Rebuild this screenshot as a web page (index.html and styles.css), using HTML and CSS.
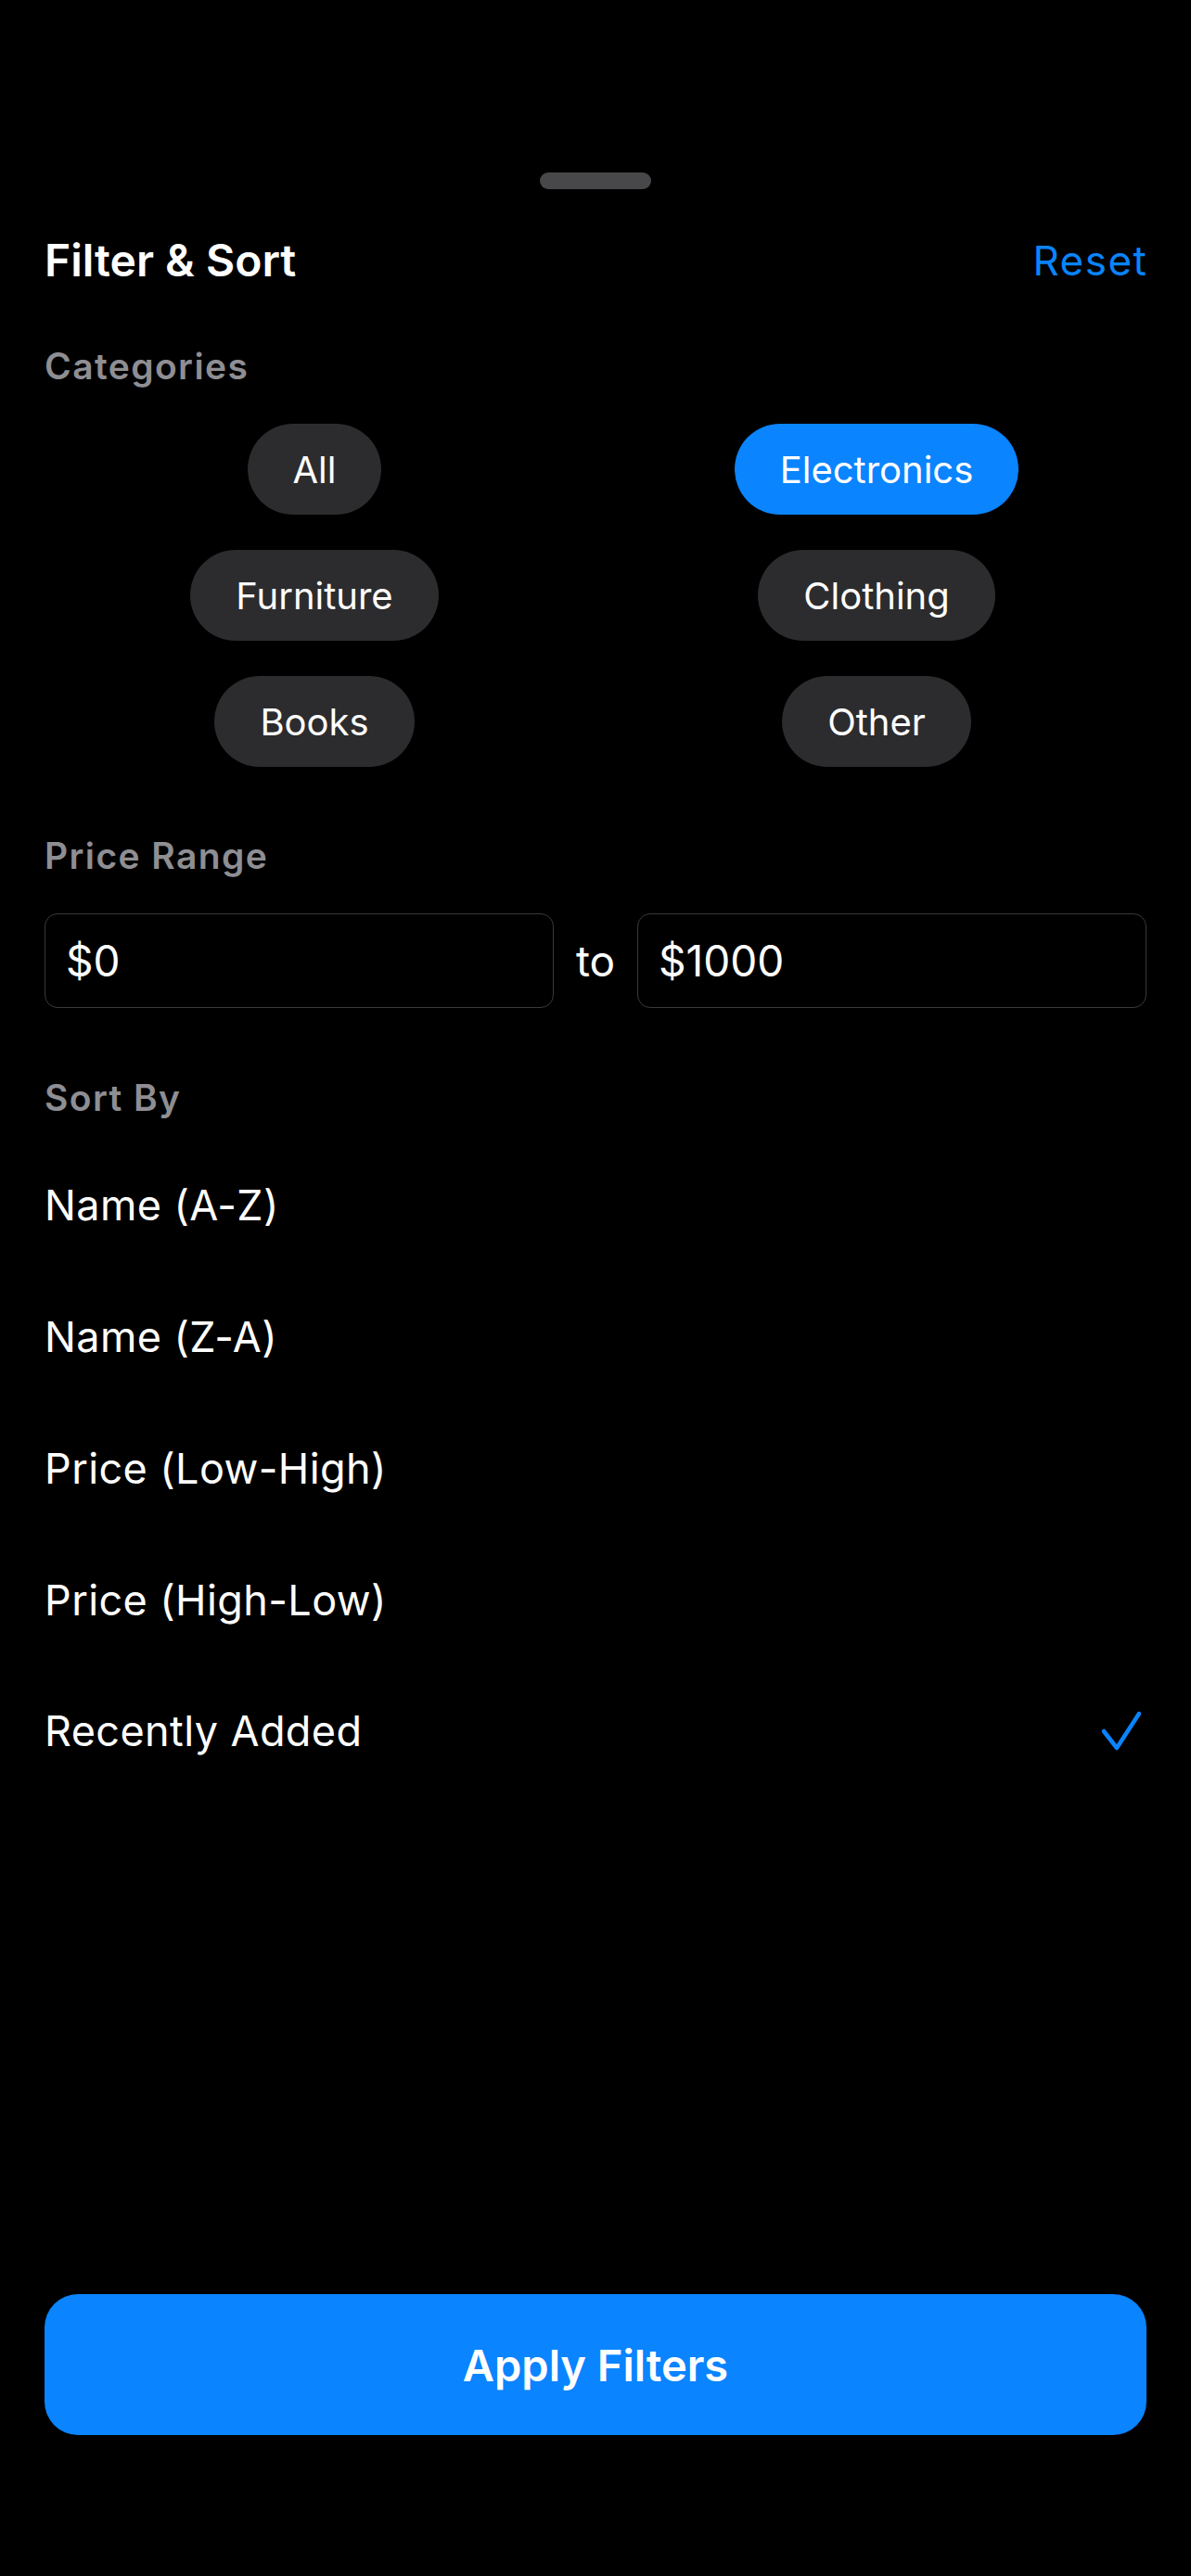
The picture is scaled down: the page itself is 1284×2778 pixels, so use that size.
FILE: index.html
```html
<!DOCTYPE html>
<html lang="en">
<head>
<meta charset="utf-8">
<title>Filter &amp; Sort</title>
<link rel="stylesheet" href="styles.css">
</head>
<body>
<div class="sheet">
  <div class="grabber"></div>
  <div class="header">
    <div class="title">Filter &amp; Sort</div>
    <div class="reset">Reset</div>
  </div>

  <div class="section-label label-categories">Categories</div>
  <div class="chips">
    <div class="chip-cell"><span class="chip">All</span></div>
    <div class="chip-cell"><span class="chip selected">Electronics</span></div>
    <div class="chip-cell"><span class="chip">Furniture</span></div>
    <div class="chip-cell"><span class="chip">Clothing</span></div>
    <div class="chip-cell"><span class="chip">Books</span></div>
    <div class="chip-cell"><span class="chip">Other</span></div>
  </div>

  <div class="section-label label-price">Price Range</div>
  <div class="price-row">
    <div class="price-input">$0</div>
    <div class="price-to">to</div>
    <div class="price-input">$1000</div>
  </div>

  <div class="section-label label-sort">Sort By</div>
  <div class="sort-list">
    <div class="sort-row"><span>Name (A-Z)</span></div>
    <div class="sort-row"><span>Name (Z-A)</span></div>
    <div class="sort-row"><span>Price (Low-High)</span></div>
    <div class="sort-row"><span>Price (High-Low)</span></div>
    <div class="sort-row"><span>Recently Added</span>
      <svg class="check" width="52" height="52" viewBox="0 0 52 52"><path d="M6 26 L20 44 L44 7" fill="none" stroke="#0a84ff" stroke-width="4.5" stroke-linecap="round" stroke-linejoin="round"/></svg>
    </div>
  </div>

  <div class="spacer"></div>
  <div class="apply">Apply Filters</div>
</div>
</body>
</html>
```

FILE: styles.css
```css
html, body {
  margin: 0;
  padding: 0;
  background: #000;
}
body {
  font-family: Inter, "Noto Sans", "Liberation Sans", sans-serif;
  color: #fff;
}
.sheet {
  min-height: 2778px;
  box-sizing: border-box;
  padding: 186px 48px 152px;
  display: flex;
  flex-direction: column;
}
.grabber {
  align-self: center;
  width: 120px;
  height: 18px;
  border-radius: 9px;
  background: #48484a;
}
.header {
  margin-top: 47px;
  height: 60px;
  display: flex;
  align-items: center;
  justify-content: space-between;
}
.title {
  font-size: 48px;
  line-height: 60px;
  font-weight: 600;
}
.reset {
  font-size: 44px;
  line-height: 60px;
  letter-spacing: 1.5px;
  margin-right: -1.5px;
  color: #0a84ff;
}
.section-label {
  font-size: 39px;
  line-height: 48px;
  font-weight: 600;
  letter-spacing: 1.4px;
  color: #8e8e93;
}
.label-categories { margin-top: 60px; }
.label-price { margin-top: 72px; }
.label-sort { margin-top: 73px; }
.chips {
  margin-top: 38px;
  display: grid;
  grid-template-columns: 1fr 1fr;
  column-gap: 24px;
  row-gap: 38px;
}
.chip-cell {
  display: flex;
  justify-content: center;
}
.chip {
  height: 98px;
  padding: 0 49px;
  border-radius: 49px;
  background: #2c2c2e;
  font-size: 40px;
  display: flex;
  align-items: center;
}
.chip.selected {
  background: #0a84ff;
}
.price-row {
  margin-top: 38px;
  display: flex;
  align-items: center;
  gap: 24px;
}
.price-input {
  flex: 1;
  height: 102px;
  box-sizing: border-box;
  border: 1.5px solid #3a3a3c;
  border-radius: 14px;
  padding: 0 22px;
  font-size: 46px;
  display: flex;
  align-items: center;
}
.price-to {
  font-size: 46px;
}
.sort-list {
  margin-top: 21px;
  display: flex;
  flex-direction: column;
}
.sort-row {
  height: 141.75px;
  display: flex;
  align-items: center;
  justify-content: space-between;
  font-size: 45px;
  letter-spacing: 0.4px;
}
.check {
  display: block;
}
.spacer {
  flex: 1;
}
.apply {
  height: 152px;
  border-radius: 36px;
  background: #0a84ff;
  display: flex;
  align-items: center;
  justify-content: center;
  font-size: 47px;
  font-weight: 600;
}
```
